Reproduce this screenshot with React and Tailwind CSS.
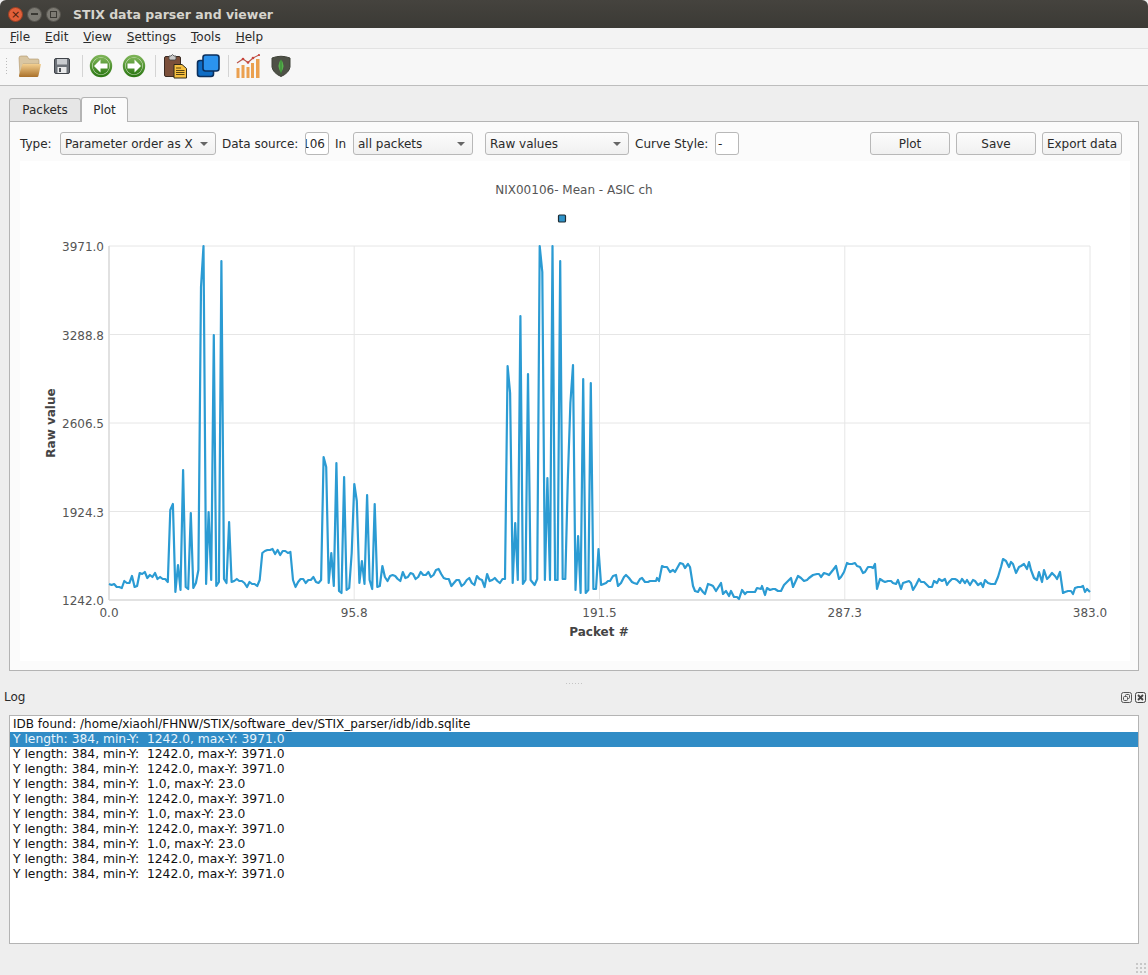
import { ChevronDown } from 'lucide-react';

// y pixel of each packet for the first 194 packets
const leftYs = [
  584, 585, 584, 587, 587, 588, 581, 583, 583, 576, 587, 586, 573, 574, 572, 578, 575, 577, 573, 579, 577, 579, 579, 582,
  510, 504, 592, 565, 590, 470, 587, 589, 513, 588, 583, 570, 287, 246, 584, 512, 580, 335, 586, 582, 261, 579, 583, 522,
  582, 581, 579, 581, 581, 583, 587, 582, 584, 584, 586, 580, 553, 551, 550, 550, 549, 554, 550, 555, 551, 551, 553, 552,
  580, 587, 582, 579, 579, 583, 580, 580, 577, 582, 583, 580, 457, 467, 583, 553, 586, 463, 591, 593, 477, 590, 588, 553,
  484, 501, 583, 561, 584, 495, 580, 589, 504, 587, 586, 566, 577, 581, 576, 575, 576, 579, 581, 572, 578, 577, 573, 574,
  579, 577, 572, 575, 575, 572, 577, 575, 570, 569, 574, 578, 579, 579, 586, 583, 580, 580, 586, 584, 580, 578, 583, 585,
  576, 579, 580, 587, 574, 581, 580, 578, 581, 583, 579, 579, 366, 393, 583, 523, 580, 316, 584, 580, 374, 580, 585, 579,
  246, 272, 580, 478, 580, 246, 580, 580, 261, 579, 579, 480, 403, 365, 590, 536, 593, 379, 593, 590, 383, 589, 589, 549,
  585, 584,
];

// the quieter right side, [x, y] in pixels
const rightPts = [
  [606, 583], [608, 581], [610, 581], [613, 576], [616, 575], [618, 586], [621, 583], [624, 577], [626, 575], [629, 578],
  [632, 582], [634, 583], [637, 584], [640, 579], [642, 578], [645, 582], [648, 582], [650, 581], [653, 581], [656, 581],
  [657, 578], [659, 581], [662, 566], [664, 567], [667, 567], [670, 572], [673, 570], [675, 572], [680, 563], [683, 564],
  [685, 568], [688, 564], [690, 567], [693, 586], [695, 591], [698, 592], [700, 588], [703, 592], [705, 594], [708, 584],
  [711, 585], [713, 586], [716, 591], [721, 583], [723, 594], [726, 591], [729, 596], [731, 591], [734, 597], [737, 597],
  [739, 599], [742, 590], [745, 594], [747, 592], [750, 592], [753, 592], [755, 592], [757, 588], [761, 589], [762, 586],
  [765, 595], [767, 588], [770, 590], [773, 589], [775, 589], [778, 591], [781, 591], [784, 585], [787, 582], [791, 578],
  [793, 587], [798, 576], [801, 578], [804, 581], [807, 580], [809, 578], [813, 575], [817, 574], [819, 574], [821, 577],
  [824, 573], [827, 574], [829, 575], [833, 570], [836, 566], [839, 579], [841, 577], [844, 572], [847, 563], [849, 564],
  [852, 564], [855, 563], [857, 566], [860, 567], [863, 573], [865, 572], [868, 567], [871, 567], [873, 568], [875, 564],
  [877, 589], [880, 579], [883, 581], [885, 582], [888, 581], [891, 581], [893, 583], [896, 584], [898, 580], [901, 589],
  [903, 583], [906, 582], [909, 581], [911, 583], [913, 590], [916, 585], [919, 579], [921, 582], [924, 582], [927, 585],
  [929, 587], [932, 587], [934, 581], [937, 583], [939, 579], [942, 581], [945, 579], [947, 585], [949, 582], [952, 579],
  [955, 579], [957, 580], [960, 583], [962, 579], [965, 583], [967, 580], [970, 585], [973, 580], [975, 581], [978, 585],
  [981, 583], [983, 587], [985, 580], [988, 583], [991, 584], [995, 584], [998, 577], [1001, 567], [1003, 559], [1006, 561],
  [1009, 567], [1011, 562], [1013, 564], [1016, 573], [1019, 567], [1021, 566], [1024, 564], [1027, 569], [1029, 562],
  [1031, 570], [1034, 578], [1037, 580], [1039, 572], [1042, 582], [1044, 570], [1047, 579], [1049, 577], [1052, 573],
  [1055, 576], [1057, 579], [1060, 572], [1063, 593], [1065, 592], [1068, 591], [1071, 591], [1073, 594], [1075, 588],
  [1078, 587], [1081, 587], [1083, 586], [1085, 592], [1087, 589], [1090, 592],
];

const linePoints = [
  // spikes after packet 165 sit 1.5px further right than the plain scale gives
  ...leftYs.map((y, i) => `${(109 + i * 2.555 + (i > 165 ? 1.5 : 0)).toFixed(1)},${y}`),
  ...rightPts.map(([x, y]) => `${x},${y}`),
].join(' ');

const logLines = [
  'Y length: 384, min-Y:  1242.0, max-Y: 3971.0',
  'Y length: 384, min-Y:  1242.0, max-Y: 3971.0',
  'Y length: 384, min-Y:  1242.0, max-Y: 3971.0',
  'Y length: 384, min-Y:  1.0, max-Y: 23.0',
  'Y length: 384, min-Y:  1242.0, max-Y: 3971.0',
  'Y length: 384, min-Y:  1.0, max-Y: 23.0',
  'Y length: 384, min-Y:  1242.0, max-Y: 3971.0',
  'Y length: 384, min-Y:  1.0, max-Y: 23.0',
  'Y length: 384, min-Y:  1242.0, max-Y: 3971.0',
  'Y length: 384, min-Y:  1242.0, max-Y: 3971.0',
];

const FolderIcon = () => (
  <svg width="24" height="24" viewBox="0 0 24 24">
    <defs>
      <linearGradient id="fold" x1="0" y1="0" x2="0" y2="1">
        <stop offset="0" stopColor="#f3cf8f" />
        <stop offset="1" stopColor="#a9702a" />
      </linearGradient>
    </defs>
    <path d="M2 22 L1 4 Q1 2 3 2 H9 L11 5 H20 Q21 5 21 7 V10 H5 Z" fill="#d9c6a2" stroke="#b09468" strokeWidth="0.6" />
    <path d="M4.5 10 H23 L20.5 21.5 Q20.4 23 19 23 H2 Q0.8 23 1 21.5 Z" fill="url(#fold)" />
  </svg>
);

const SaveIcon = () => (
  <svg width="24" height="24" viewBox="0 0 24 24">
    <rect x="4.5" y="4.5" width="15" height="15" rx="1.5" fill="#6d7279" stroke="#3f4349" />
    <rect x="7" y="5" width="10" height="5.5" fill="#c9ccd0" />
    <rect x="7.5" y="13" width="9" height="6" fill="#e8e9ea" />
    <rect x="9" y="14" width="2" height="4" fill="#4b4f55" />
  </svg>
);

const ArrowIcon = ({ flip }) => (
  <svg width="24" height="24" viewBox="0 0 24 24">
    <defs>
      <linearGradient id="arrowGreen" x1="0" y1="0" x2="0" y2="1">
        <stop offset="0" stopColor="#7cb356" />
        <stop offset="1" stopColor="#2f7a16" />
      </linearGradient>
    </defs>
    <circle cx="12" cy="12" r="10" fill="#eef5e6" stroke="url(#arrowGreen)" strokeWidth="2.4" />
    <circle cx="12" cy="12" r="8.4" fill="url(#arrowGreen)" />
    <path
      d="M11.5 5.5 L5 12 L11.5 18.5 V14.5 H18.5 V9.5 H11.5 Z"
      fill="#fff"
      transform={flip ? 'rotate(180 12 12)' : undefined}
    />
  </svg>
);

const ClipboardIcon = () => (
  <svg width="24" height="26" viewBox="0 0 24 26">
    <rect x="1.5" y="3.5" width="16" height="20" rx="1.5" fill="#7b4f3a" stroke="#3a2a22" />
    <path d="M6 5 V3 H8 Q9.5 0 11 3 H13 V5 Q13.5 6.5 12 7 H7 Q5.5 6.5 6 5 Z" fill="#c9c9c9" stroke="#444" strokeWidth="0.8" />
    <path d="M11 11.5 H19 L23.5 15.5 V25 H11 Z" fill="#f6bf3f" stroke="#2f2a1c" />
    <path d="M13 15 H18 M13 17.5 H21.5 M13 19.5 H21.5 M13 21.5 H21.5" stroke="#5a4513" strokeWidth="1" />
  </svg>
);

const CopyIcon = () => (
  <svg width="24" height="24" viewBox="0 0 24 24">
    <rect x="1.5" y="6.5" width="16" height="16" rx="2.5" fill="#0e6cc4" stroke="#0b2f5c" strokeWidth="1.6" />
    <rect x="7" y="1" width="16" height="16" rx="2.5" fill="#2b93ee" stroke="#0b2f5c" strokeWidth="1.6" />
  </svg>
);

const ChartIcon = () => (
  <svg width="24" height="26" viewBox="0 0 24 26">
    <g fill="#eba04f">
      <rect x="0.5" y="15" width="3" height="10" />
      <rect x="5.5" y="12" width="3" height="13" />
      <rect x="10.5" y="14" width="3" height="11" />
      <rect x="15" y="10" width="3" height="15" />
      <rect x="20" y="6" width="3.5" height="19" />
    </g>
    <path d="M1 10 L7 6 L12 9.5 L17 5 L23 2" fill="none" stroke="#b9544a" strokeWidth="1.1" />
    <g fill="#c9453c">
      <circle cx="7" cy="6" r="1.3" />
      <circle cx="12" cy="9.5" r="1.3" />
      <circle cx="17" cy="5" r="1.3" />
      <circle cx="23" cy="2" r="1.1" />
    </g>
  </svg>
);

const ShieldIcon = () => (
  <svg width="24" height="24" viewBox="0 0 24 24">
    <path d="M3 4 Q12 0.5 21 4 V13 Q20 19 12 22.5 Q4 19 3 13 Z" fill="#4e5146" stroke="#3f4238" />
    <path d="M12 5.5 Q17 11 12 19 Q7 11 12 5.5 Z" fill="#57b04c" />
    <path d="M12 6 V20" stroke="#2e7a2e" strokeWidth="0.8" />
  </svg>
);

const Combo = ({ label, width }) => (
  <div className={`${width} h-[23px] shrink-0 flex items-center justify-between pl-[4px] pr-[7px] border border-[#b8b8b8] rounded-[3px] bg-gradient-to-b from-[#fcfcfc] to-[#f0f0f0] text-[#2a2a2a]`}>
    <span className="pt-px whitespace-nowrap">{label}</span>
    <span className="w-0 h-0 border-x-[4px] border-x-transparent border-t-[4px] border-t-[#666]" />
  </div>
);

const Field = ({ children, end }) => (
  <div className={`w-[24px] h-[23px] shrink-0 flex items-center overflow-hidden border border-[#b8b8b8] rounded-[3px] bg-white text-[#2a2a2a] ${end ? 'justify-end pr-[3px]' : 'pl-[2px]'}`}>
    <span className="shrink-0 pt-px">{children}</span>
  </div>
);

const Btn = ({ children }) => (
  <button className="w-[80px] h-[23px] shrink-0 flex items-center justify-center pt-px border border-[#b8b8b8] rounded-[3px] bg-gradient-to-b from-[#fcfcfc] to-[#f0f0f0] text-[#2a2a2a] whitespace-nowrap">
    {children}
  </button>
);

const Menu = ({ first, rest }) => (
  <span><u>{first}</u>{rest}</span>
);

const Separator = ({ ml }) => <div className={`${ml} w-px h-[22px] bg-[#d4d4d4]`} />;

const Plot = () => {
  const xs = [109, 354.2, 599.5, 844.8, 1090];
  const ys = [246, 334.5, 423, 511.5, 600];
  const xLabels = ['0.0', '95.8', '191.5', '287.3', '383.0'];
  const yLabels = ['3971.0', '3288.8', '2606.5', '1924.3', '1242.0'];
  return (
    <svg width="1110" height="500" viewBox="20 161 1110 500" className="block bg-white" style={{ fontFamily: '"DejaVu Sans", sans-serif' }}>
      {xs.map((x) => <line key={x} x1={x} x2={x} y1="246" y2="600" stroke="#e6e6e6" strokeWidth="1" />)}
      {ys.map((y) => <line key={y} x1="109" x2="1090" y1={y} y2={y} stroke="#e6e6e6" strokeWidth="1" />)}
      <line x1="109" x2="1090" y1="600" y2="600" stroke="#dcdcdc" strokeWidth="1.6" />
      <line x1="109" x2="109" y1="246" y2="600" stroke="#dcdcdc" strokeWidth="1.6" />
      <polyline points={linePoints} fill="none" stroke="#2b9bd3" strokeWidth="2.2" strokeLinejoin="round" />
      <text x="574" y="194" textAnchor="middle" fontSize="12" fill="#555">NIX00106- Mean - ASIC ch</text>
      <rect x="558.5" y="215" width="7" height="7" fill="#2f93c9" stroke="#1d2b33" strokeWidth="1.2" rx="1" />
      {xLabels.map((t, i) => (
        <text key={t} x={xs[i]} y="617" textAnchor="middle" fontSize="12" fill="#555">{t}</text>
      ))}
      {yLabels.map((t, i) => (
        <text key={t} x="104" y={ys[i] + 5} textAnchor="end" fontSize="12" fill="#555">{t}</text>
      ))}
      <text x="599" y="636" textAnchor="middle" fontSize="12" fontWeight="700" fill="#444">Packet #</text>
      <text x="0" y="0" transform="translate(55 423) rotate(-90)" textAnchor="middle" fontSize="12" fontWeight="700" fill="#444">Raw value</text>
    </svg>
  );
};

const App = () => {
  return (
    <div className="w-[1148px] h-[975px] overflow-hidden flex flex-col bg-[#eeeeee] text-[12px] leading-[15px] text-black font-['DejaVu_Sans',sans-serif]">
      {/* window title */}
      <div className="h-[28px] shrink-0 flex items-center pl-[8px] bg-gradient-to-b from-[#45433e] to-[#3b3a35] rounded-t-[6px]">
        <div className="w-[15px] h-[15px] rounded-full bg-[#e2603a] border border-[#9c3f22] flex items-center justify-center text-[11px] text-[#4a1d0d]">×</div>
        <div className="ml-[4px] w-[15px] h-[15px] rounded-full bg-[#7d7b74] border border-[#55534d] flex items-center justify-center">
          <span className="w-[7px] h-[2px] bg-[#3a3934]" />
        </div>
        <div className="ml-[4px] w-[15px] h-[15px] rounded-full bg-[#7d7b74] border border-[#55534d] flex items-center justify-center">
          <span className="w-[7px] h-[7px] border border-[#3a3934]" />
        </div>
        <span className="ml-[12px] font-bold text-[12.5px] text-[#d6d4cd]">STIX data parser and viewer</span>
      </div>

      {/* menu bar */}
      <div className="h-[20px] shrink-0 flex items-center gap-[15px] pl-[10px] pb-px bg-[#f3f3f3] text-[#2a2a2a]">
        <Menu first="F" rest="ile" />
        <Menu first="E" rest="dit" />
        <Menu first="V" rest="iew" />
        <Menu first="S" rest="ettings" />
        <Menu first="T" rest="ools" />
        <Menu first="H" rest="elp" />
      </div>

      {/* toolbar */}
      <div className="h-[38px] shrink-0 flex items-center pl-[5px] pb-[2px] bg-[#f7f7f7] border-t border-[#e2e2e2] border-b border-b-[#bdbdbd]">
        <div className="w-[4px] h-[18px] bg-[radial-gradient(#bcbcbc_1px,transparent_1px)] bg-[length:3px_3px]" />
        <div className="ml-[9px] w-[24px]"><FolderIcon /></div>
        <div className="ml-[8px] w-[24px]"><SaveIcon /></div>
        <Separator ml="ml-[8px]" />
        <div className="ml-[6px] w-[24px]"><ArrowIcon /></div>
        <div className="ml-[9px] w-[24px]"><ArrowIcon flip /></div>
        <Separator ml="ml-[9px]" />
        <div className="ml-[7px] w-[24px]"><ClipboardIcon /></div>
        <div className="ml-[9px] w-[24px]"><CopyIcon /></div>
        <Separator ml="ml-[8px]" />
        <div className="ml-[7px] w-[24px]"><ChartIcon /></div>
        <div className="ml-[9px] w-[24px]"><ShieldIcon /></div>
      </div>

      {/* tabs */}
      <div className="h-[35px] shrink-0 flex items-end pl-[9px]">
        <div className="w-[72px] h-[23px] flex items-center justify-center pt-px border border-b-0 border-[#b4b4b4] rounded-t-[3px] bg-[#e6e6e6] text-[#2a2a2a]">Packets</div>
        <div className="relative z-10 -mb-px w-[47px] h-[25px] flex items-center justify-center border border-b-0 border-[#b4b4b4] rounded-t-[3px] bg-[#fbfbfb] text-[#2a2a2a]">Plot</div>
      </div>

      <div className="mx-[9px] h-[550px] shrink-0 flex flex-col border border-[#b4b4b4] bg-[#fbfbfb]">
        <div className="h-[39px] shrink-0 flex items-start pt-[10px] pl-[10px] pr-[16px] text-[#2a2a2a]">
          <span className="w-[33px] mt-[5px]">Type:</span>
          <div className="ml-[7px]"><Combo label="Parameter order as X" width="w-[156px]" /></div>
          <span className="ml-[6px] w-[76px] mt-[5px] whitespace-nowrap">Data source:</span>
          <div className="ml-[7px]"><Field end>106</Field></div>
          <span className="ml-[6px] w-[12px] mt-[5px]">In</span>
          <div className="ml-[6px]"><Combo label="all packets" width="w-[120px]" /></div>
          <div className="ml-[12px]"><Combo label="Raw values" width="w-[144px]" /></div>
          <span className="ml-[6px] w-[73px] mt-[5px] whitespace-nowrap">Curve Style:</span>
          <div className="ml-[7px]"><Field>-</Field></div>
          <div className="ml-auto flex gap-[6px]">
            <Btn>Plot</Btn>
            <Btn>Save</Btn>
            <Btn>Export data</Btn>
          </div>
        </div>
        <div className="pl-[10px]">
          <Plot />
        </div>
      </div>

      {/* splitter */}
      <div className="h-[17px] shrink-0 flex items-end justify-center pb-[3px]">
        <div className="w-[18px] h-[3px] bg-[radial-gradient(#c4c4c4_1px,transparent_1px)] bg-[length:3px_3px]" />
      </div>

      {/* log dock */}
      <div className="h-[27px] shrink-0 flex items-center justify-between pl-[4px] pr-[2px] pb-[9px] text-[#2a2a2a]">
        <span>Log</span>
        <div className="flex gap-[3px]">
          <svg width="11" height="11" viewBox="0 0 11 11" fill="none" stroke="#555" strokeWidth="1">
            <rect x="0.5" y="0.5" width="10" height="10" rx="2" />
            <rect x="4.5" y="2.5" width="4" height="4" rx="1" />
            <rect x="2.5" y="4.5" width="4" height="4" rx="1" fill="#eeeeee" />
          </svg>
          <svg width="11" height="11" viewBox="0 0 11 11" fill="none" stroke="#444" strokeWidth="1">
            <rect x="0.5" y="0.5" width="10" height="10" rx="2" />
            <path d="M3 3 L8 8 M8 3 L3 8" strokeWidth="1.8" />
          </svg>
        </div>
      </div>

      <div className="mx-[9px] h-[229px] shrink-0 pt-px border border-[#b4b4b4] bg-white text-[12px] leading-[15px] text-[#111]">
        <div className="pl-[3px] whitespace-pre">IDB found: /home/xiaohl/FHNW/STIX/software_dev/STIX_parser/idb/idb.sqlite</div>
        {logLines.map((line, i) => (
          <div key={i} className={`pl-[3px] whitespace-pre text-[12.3px] ${i === 0 ? 'bg-[#308cc6] text-[#e8f4fb]' : ''}`}>{line}</div>
        ))}
      </div>

      {/* status bar */}
      <div className="flex-1 flex items-end justify-end pr-px pb-px">
        <div className="w-[12px] h-[12px] bg-[radial-gradient(#c8c8c8_1px,transparent_1px)] bg-[length:4px_4px]" />
      </div>
    </div>
  );
};

export default App;
